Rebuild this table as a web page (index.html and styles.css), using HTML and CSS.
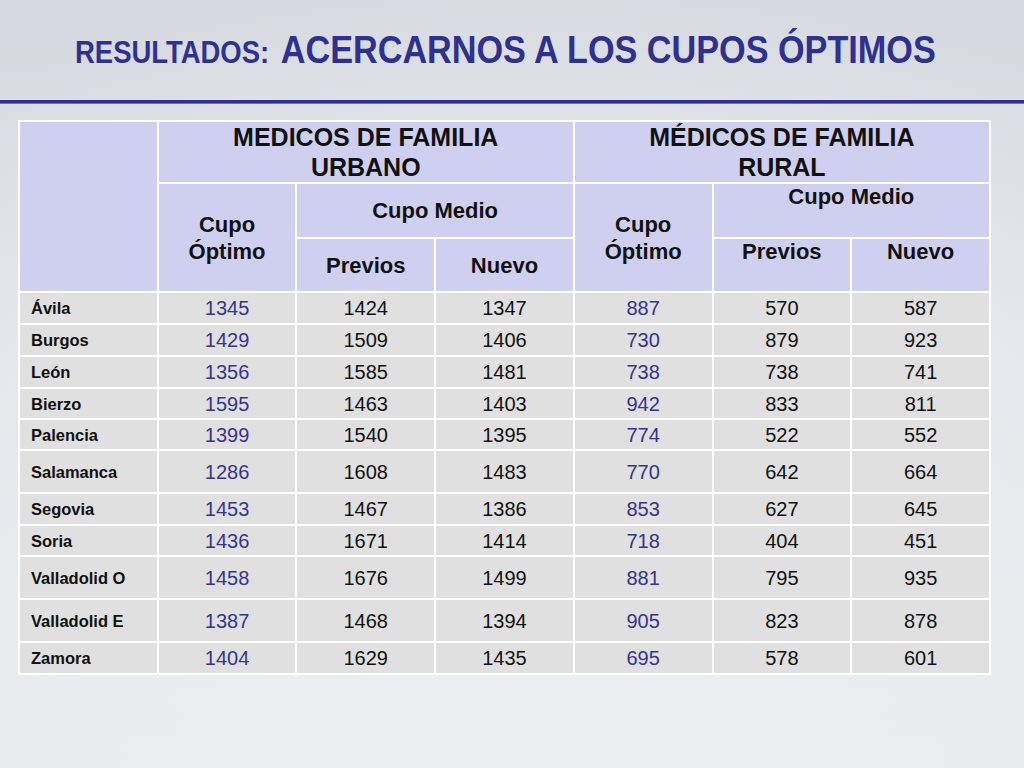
FILE: index.html
```html
<!DOCTYPE html>
<html lang="es">
<head>
<meta charset="utf-8">
<title>Resultados: acercarnos a los cupos óptimos</title>
<link rel="stylesheet" href="styles.css">
</head>
<body>
<div class="slide">
  <header class="slide-head">
    <h1 class="title"><span class="title-lead">RESULTADOS:</span> <span class="title-main">ACERCARNOS A LOS CUPOS ÓPTIMOS</span></h1>
  </header>
  <div class="rule"></div>
  <div class="table-wrap">
    <table class="cupos">
      <colgroup>
        <col><col><col><col><col><col><col>
      </colgroup>
      <thead>
        <tr class="h-top">
          <th rowspan="3" class="hd"></th>
          <th colspan="3" class="hd big">MEDICOS DE FAMILIA<br>URBANO</th>
          <th colspan="3" class="hd big">MÉDICOS DE FAMILIA<br>RURAL</th>
        </tr>
        <tr class="h-mid">
          <th rowspan="2" class="hd sub">Cupo<br>Óptimo</th>
          <th colspan="2" class="hd sub">Cupo Medio</th>
          <th rowspan="2" class="hd sub">Cupo<br>Óptimo</th>
          <th colspan="2" class="hd sub top">Cupo Medio</th>
        </tr>
        <tr class="h-low">
          <th class="hd sub">Previos</th>
          <th class="hd sub">Nuevo</th>
          <th class="hd sub top">Previos</th>
          <th class="hd sub top">Nuevo</th>
        </tr>
      </thead>
      <tbody>
        <tr class="r30"><td class="lbl">Ávila</td><td class="opt">1345</td><td>1424</td><td>1347</td><td class="opt">887</td><td>570</td><td>587</td></tr>
        <tr class="r30"><td class="lbl">Burgos</td><td class="opt">1429</td><td>1509</td><td>1406</td><td class="opt">730</td><td>879</td><td>923</td></tr>
        <tr class="r30"><td class="lbl">León</td><td class="opt">1356</td><td>1585</td><td>1481</td><td class="opt">738</td><td>738</td><td>741</td></tr>
        <tr class="r29"><td class="lbl">Bierzo</td><td class="opt">1595</td><td>1463</td><td>1403</td><td class="opt">942</td><td>833</td><td>811</td></tr>
        <tr class="r29"><td class="lbl">Palencia</td><td class="opt">1399</td><td>1540</td><td>1395</td><td class="opt">774</td><td>522</td><td>552</td></tr>
        <tr class="r41"><td class="lbl">Salamanca</td><td class="opt">1286</td><td>1608</td><td>1483</td><td class="opt">770</td><td>642</td><td>664</td></tr>
        <tr class="r30"><td class="lbl">Segovia</td><td class="opt">1453</td><td>1467</td><td>1386</td><td class="opt">853</td><td>627</td><td>645</td></tr>
        <tr class="r29"><td class="lbl">Soria</td><td class="opt">1436</td><td>1671</td><td>1414</td><td class="opt">718</td><td>404</td><td>451</td></tr>
        <tr class="r41"><td class="lbl">Valladolid O</td><td class="opt">1458</td><td>1676</td><td>1499</td><td class="opt">881</td><td>795</td><td>935</td></tr>
        <tr class="r41"><td class="lbl">Valladolid E</td><td class="opt">1387</td><td>1468</td><td>1394</td><td class="opt">905</td><td>823</td><td>878</td></tr>
        <tr class="r30"><td class="lbl">Zamora</td><td class="opt">1404</td><td>1629</td><td>1435</td><td class="opt">695</td><td>578</td><td>601</td></tr>
      </tbody>
    </table>
  </div>
</div>
</body>
</html>
```

FILE: styles.css
```css
html, body {
  margin: 0;
  padding: 0;
}

body {
  width: 1024px;
  height: 768px;
  overflow: hidden;
  font-family: "Liberation Sans", Arial, sans-serif;
  background:
    radial-gradient(ellipse 75% 70% at 52% 62%, rgba(240, 242, 245, 0.85) 0%, rgba(240, 242, 245, 0) 100%),
    linear-gradient(180deg, #d5d8de 0%, #dfe2e7 40%, #e9ebee 100%);
}

.slide {
  width: 1024px;
  height: 768px;
}

.slide-head {
  padding: 30px 0 0 75px;
}

.title {
  margin: 0;
  height: 40px;
  line-height: 40px;
  color: #2e3192;
  font-weight: bold;
  white-space: nowrap;
  transform: scaleX(0.9);
  transform-origin: left center;
}

.title-lead {
  font-size: 30.5px;
  margin-right: 4px;
}

.title-main {
  font-size: 38px;
}

.rule {
  margin-top: 30px;
  height: 3px;
  background: #2e3192;
  border-bottom: 1px solid #6c6eb4;
}

.table-wrap {
  padding: 16px 0 0 18px;
}

.cupos {
  width: 973px;
  table-layout: fixed;
  border-collapse: separate;
  border-spacing: 2px;
  background: #ffffff;
}

.cupos th,
.cupos td {
  padding: 0;
  text-align: center;
  vertical-align: middle;
}

.hd {
  background: #cfd0ef;
  color: #111111;
  font-weight: bold;
}

.big {
  font-size: 25px;
  line-height: 30px;
}

.sub {
  font-size: 22px;
  line-height: 27px;
}

.sub.top {
  vertical-align: top;
  line-height: 26px;
}

.h-top { height: 60px; }
.h-mid { height: 53px; }
.h-low { height: 52px; }

.cupos td {
  background: #e0e0e0;
  color: #111111;
  font-size: 20px;
  line-height: 24px;
}

.cupos td.opt {
  color: #35348f;
}

.cupos td.lbl {
  text-align: left;
  padding-left: 11px;
  font-size: 16.5px;
  font-weight: bold;
}

.r30 { height: 30px; }
.r29 { height: 29px; }
.r41 { height: 41px; }
```
